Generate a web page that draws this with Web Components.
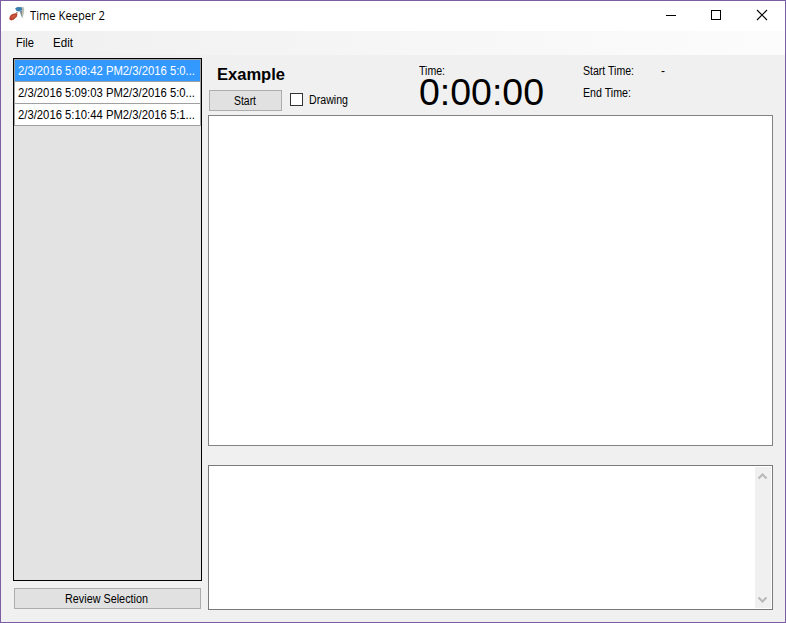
<!DOCTYPE html>
<html lang="en"><head><meta charset="utf-8"><title>Time Keeper 2</title>
<style>
html,body{margin:0;height:100%;overflow:hidden}
body{font:12px/16px "Liberation Sans",Arial,sans-serif;color:#000}
</style></head><body>
<time-keeper></time-keeper>
<script>
const define=(name,html,setup)=>customElements.define(name,class extends HTMLElement{
  constructor(){super();this.attachShadow({mode:'open'}).innerHTML=html;}
  connectedCallback(){if(setup)setup.call(this,this.shadowRoot);}
});

// A single line of text condensed or widened to the width attribute.
define('fit-text',`<style>:host{display:block;white-space:nowrap;flex:none}
span{display:inline-block;transform-origin:0 50%;vertical-align:top}</style><span><slot></slot></span>`,
function(root){
  const w=+this.getAttribute('width'),s=root.querySelector('span');
  this.style.width=w+'px';
  s.style.transform=`scaleX(${w/s.getBoundingClientRect().width})`;
});

define('title-bar',`<style>
:host{display:flex;height:30px;background:#fff;align-items:flex-start}
.icon{margin:5px 5px 0 8px;flex:none}
fit-text{font:12px/16px "Open Sans","Noto Sans",sans-serif;padding-top:7px}
.controls{margin-left:auto;display:flex}
.controls svg{display:block}
</style>
<svg class="icon" width="16" height="16" viewBox="0 0 16 16">
<path d="M6.2 2.6 8 1.2l5-.5 2.2 1-.2 4-1 5-1 2-.5-3-1.4-3.8-2.6-1.8z" fill="#b3bec2"/>
<path d="M6.2 2.5 8.5 1l3.8.2 1.2 2.3-3.5 2-2.7-.8z" fill="#397fae"/>
<path d="m11 5.5 2-1-.1 6.5-1.2-3z" fill="#73858c"/><path d="m13.7 1.5.7.3-.3 6-.8 2z" fill="#d3c5a3"/>
<path d="M.4 12.2C.5 9.7 3.2 7.5 6.5 7.3l2 .7-.7 2.8-3.2 3-2.5.6-1.6-.8z" fill="#b84431"/>
<path d="m2 11 3-2 2-.3-1.5 2-2 1.2z" fill="#d76043"/><path d="m6.5 7.3 1.7-1.8.4.7-.6 1.7z" fill="#9e6656"/>
</svg><fit-text width="75">Time Keeper 2</fit-text>
<div class="controls">
<svg width="45" height="30"><path d="M10 14.5h10" stroke="#000"/></svg>
<svg width="45" height="30"><rect x="10.5" y="9.5" width="9" height="9" fill="none" stroke="#000"/></svg>
<svg width="39" height="30"><path d="m11 9 10 10M21 9 11 19" stroke="#000" stroke-width="1.1"/></svg>
</div>`);

define('menu-bar',`<style>:host{display:flex;height:24px;box-sizing:border-box;padding:4px 0 0 15px;gap:19px;background:linear-gradient(90deg,#f0f0f0,#fcfcfc)}</style>
<fit-text width="18">File</fit-text><fit-text width="20">Edit</fit-text>`);

define('push-button',`<style>:host{display:flex;height:21px;box-sizing:border-box;border:1px solid #adadad;background:#e1e1e1;justify-content:center;line-height:21px;padding-right:2px}</style><slot></slot>`);

define('check-box',`<style>:host{display:flex;gap:6px;line-height:16px}i{width:11px;height:11px;border:1px solid #333;background:#fff;margin-top:1px}</style><i></i><slot></slot>`);

define('session-row',`<style>:host{display:flex;height:21px;background:#fff;border-bottom:1px solid #a0a0a0;padding-left:3px;line-height:22px}
:host([selected]){background:#3399ff;color:#fff}</style><slot></slot>`);

define('session-list',`<style>:host{display:block;box-sizing:border-box;border:1px solid #000;background:#e3e3e3}
.rows{border:solid #a0a0a0;border-width:1px 1px 0 1px}</style><div class="rows"><slot></slot></div>`);

define('note-box',`<style>:host{display:flex;box-sizing:border-box;border:1px solid #7a7a7a;background:#fff;justify-content:flex-end;padding:1px}
.bar{width:16px;background:#f0f0f0;display:flex;flex-direction:column;justify-content:space-between}
svg{display:block;margin-left:-1px}path{fill:none;stroke:#b8b8b8;stroke-width:2}</style>
<div class="bar"><svg width="17" height="17"><path d="m4.5 11.5 4-4 4 4"/></svg><svg width="17" height="17"><path d="m4.5 6.5 4 4 4-4"/></svg></div>`);

define('time-keeper',`<style>
:host{display:flex;flex-direction:column;width:786px;height:623px;box-sizing:border-box;border:1px solid #7b5ea3;background:#f0f0f0}
main{flex:1;display:grid;grid-template-columns:189px 565px;column-gap:6px;padding-left:12px}
aside{display:flex;flex-direction:column;padding-top:3px}
session-list{height:523px}aside push-button{margin:7px 1px 0}
section{display:flex;flex-direction:column}
header{height:60px;display:grid;grid-template-columns:211px 164px 190px}
.name{font:bold 16px/20px "Liberation Sans",sans-serif;padding:10px 0 0 9px}
.actions{display:flex;padding:5px 0 0 1px}
.actions push-button{width:73px}check-box{margin:2px 0 0 8px}
.label{padding-top:8px}.clock{font-size:37px;line-height:28px}
.times{display:grid;grid-template-columns:78px auto;grid-auto-rows:22px;padding-top:8px;align-content:start}
.canvas{height:331px;box-sizing:border-box;border:1px solid #828282;background:#fff}
note-box{height:145px;margin-top:19px}
</style>
<title-bar></title-bar><menu-bar></menu-bar>
<main><aside><session-list>
<session-row selected><fit-text width="177">2/3/2016 5:08:42 PM2/3/2016 5:0...</fit-text></session-row>
<session-row><fit-text width="177">2/3/2016 5:09:03 PM2/3/2016 5:0...</fit-text></session-row>
<session-row><fit-text width="177">2/3/2016 5:10:44 PM2/3/2016 5:1...</fit-text></session-row>
</session-list><push-button><fit-text width="83">Review Selection</fit-text></push-button></aside>
<section><header>
<div><div class="name"><fit-text width="68">Example</fit-text></div>
<div class="actions"><push-button><fit-text width="22">Start</fit-text></push-button><check-box><fit-text width="39">Drawing</fit-text></check-box></div></div>
<div><div class="label"><fit-text width="26">Time:</fit-text></div><div class="clock"><fit-text width="125">0:00:00</fit-text></div></div>
<div class="times"><fit-text width="51">Start Time:</fit-text><fit-text width="4">-</fit-text><fit-text width="48">End Time:</fit-text></div>
</header><div class="canvas"></div><note-box></note-box></section></main>`);
</script></body></html>
